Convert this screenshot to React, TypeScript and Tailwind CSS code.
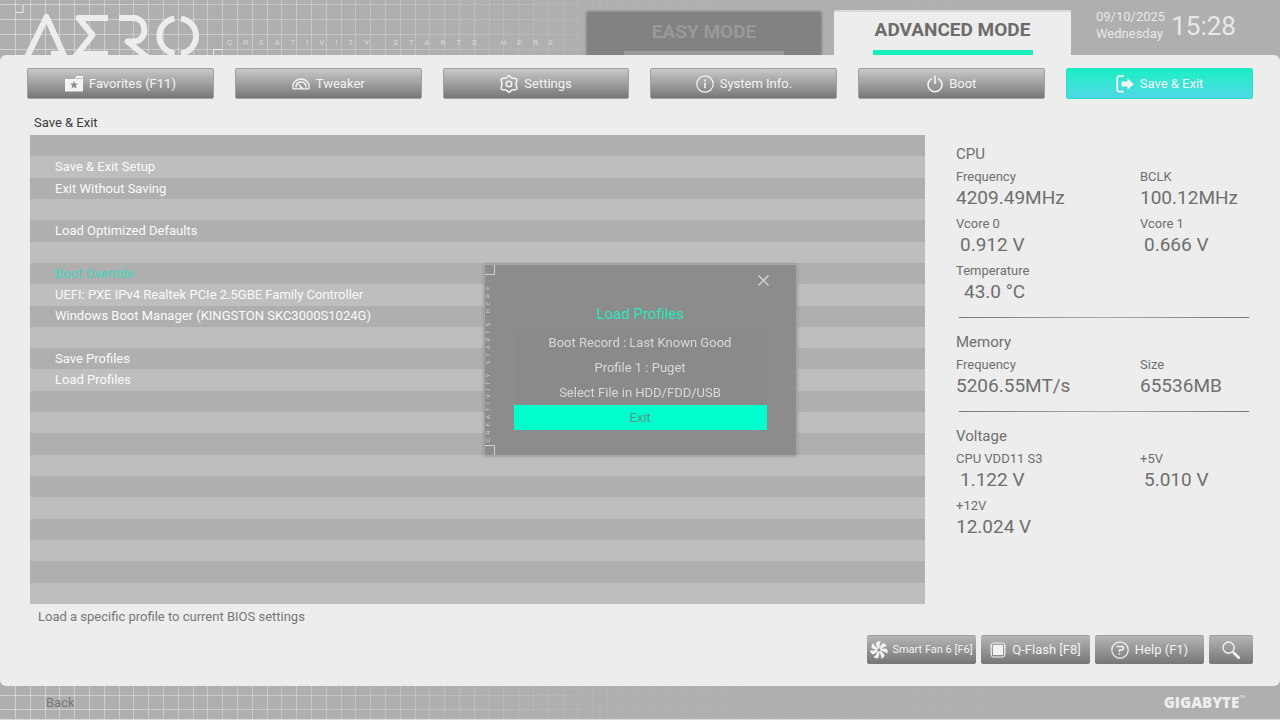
import { useState } from "react";
import type { ReactNode } from "react";

interface Reading {
  label: string;
  value: string;
  indent?: string;
}

interface SensorGroup {
  title: string;
  readings: Reading[];
}

const FONT = "font-[Roboto,'Open_Sans',sans-serif]";

const ROWS = [
  "",
  "Save & Exit Setup",
  "Exit Without Saving",
  "",
  "Load Optimized Defaults",
  "",
  "Boot Override",
  "UEFI: PXE IPv4 Realtek PCIe 2.5GBE Family Controller",
  "Windows Boot Manager (KINGSTON SKC3000S1024G)",
  "",
  "Save Profiles",
  "Load Profiles",
  ...Array<string>(10).fill(""),
];

const SENSORS: SensorGroup[] = [
  {
    title: "CPU",
    readings: [
      { label: "Frequency", value: "4209.49MHz" },
      { label: "BCLK", value: "100.12MHz" },
      { label: "Vcore 0", value: "0.912 V", indent: "pl-1" },
      { label: "Vcore 1", value: "0.666 V", indent: "pl-1" },
      { label: "Temperature", value: "43.0 °C", indent: "pl-2" },
    ],
  },
  {
    title: "Memory",
    readings: [
      { label: "Frequency", value: "5206.55MT/s" },
      { label: "Size", value: "65536MB" },
    ],
  },
  {
    title: "Voltage",
    readings: [
      { label: "CPU VDD11 S3", value: "1.122 V", indent: "pl-1" },
      { label: "+5V", value: "5.010 V", indent: "pl-1" },
      { label: "+12V", value: "12.024 V" },
    ],
  },
];

const PROFILES = [
  "Boot Record : Last Known Good",
  "Profile 1 : Puget",
  "Select File in HDD/FDD/USB",
  "Exit",
];

function FolderIcon() {
  return (
    <svg width="18" height="16" viewBox="0 0 18 16" aria-hidden="true">
      <path d="M0 3h10l1.500-3H18v15.500H0z" fill="currentColor" />
      <path d="M11.500 2.500H17" stroke="#a8a8a8" strokeWidth=".8" />
      <path d="M9 5l1.100 2.600 2.800.2-2.100 1.800.7 2.800L9 10.900l-2.500 1.500.7-2.800-2.100-1.800 2.800-.2z" fill="#8f8f8f" />
    </svg>
  );
}

function GaugeIcon() {
  return (
    <svg width="18" height="12" viewBox="0 0 18 12" fill="none" stroke="currentColor" aria-hidden="true">
      <path d="M1.200 10.800C-.2 5 4 1 9 1s9.200 4 7.800 9.800z" strokeWidth="1.300" strokeLinejoin="round" />
      <path d="M4 9.500C4 5.800 6.400 4 9 4s5 1.800 5 5.500" strokeWidth="1.500" />
      <path d="M6.500 5.500l4.500 4.800H8.800z" fill="currentColor" strokeWidth=".8" />
    </svg>
  );
}

function GearIcon() {
  return (
    <svg width="18" height="18" viewBox="0 0 18 18" fill="none" stroke="currentColor" strokeWidth="1.500" aria-hidden="true">
      <path
        d="M7 2.500Q9 -.9 11 2.500Q12.300 3.700 14 3.200Q18.300 3.300 16.400 6.700Q15.800 9 16.400 11.300Q18.300 14.700 14 14.800Q12.300 14.300 11 15.500Q9 18.900 7 15.500Q5.700 14.300 4 14.800Q-.3 14.700 1.600 11.300Q2.200 9 1.600 6.700Q-.3 3.300 4 3.200Q5.700 3.700 7 2.500z"
        strokeLinejoin="round"
      />
      <circle cx="9" cy="9" r="2.800" />
    </svg>
  );
}

function InfoIcon() {
  return (
    <svg width="18" height="18" viewBox="0 0 18 18" fill="none" stroke="currentColor" aria-hidden="true">
      <circle cx="9" cy="9" r="8.200" strokeWidth="1.200" />
      <path d="M9 7.500V13.200M9 4.500V6.200" strokeWidth="1.600" />
    </svg>
  );
}

function PowerIcon() {
  return (
    <svg width="16" height="18" viewBox="0 0 16 18" fill="none" stroke="currentColor" strokeWidth="1.600" aria-hidden="true">
      <path d="M5 3.400a7 7 0 1 0 6 0M8 .5V9" />
    </svg>
  );
}

function ExitIcon() {
  return (
    <svg width="18" height="18" viewBox="0 0 18 18" fill="none" stroke="currentColor" aria-hidden="true">
      <path d="M8 1.200H3.500Q1.200 1.200 1.200 3.500V14.500Q1.200 16.600 3.500 16.600H8" strokeWidth="1.800" />
      <path d="M5.500 6.500H11.500V3.500L17.800 9.200 11.500 14.700V11.500H5.500z" fill="currentColor" stroke="none" />
    </svg>
  );
}

function FanIcon() {
  return (
    <svg width="18" height="18" viewBox="0 0 18 18" fill="currentColor" aria-hidden="true">
      {Array.from({ length: 7 }, (_, i) => (
        <path
          key={i}
          d="M8.200 7.600C7 6 5.700 3.500 6.400 1.200Q8.500 -.2 11 .3C9.300 2.200 9.600 4.500 9.800 7.600z"
          transform={`rotate(${(i * 360) / 7} 9 9)`}
        />
      ))}
      <circle cx="9" cy="9" r="1.300" fill="#8c8c8c" />
    </svg>
  );
}

function ChipIcon() {
  return (
    <svg width="16" height="16" viewBox="0 0 16 16" fill="none" stroke="currentColor" aria-hidden="true">
      <rect x="1.300" y="1" width="13.400" height="14" rx="2" strokeWidth="1" />
      <path d="M.5 3v10M15.500 3v10" strokeWidth=".8" strokeDasharray="1 1" />
      <rect x="3" y="3" width="10" height="10" fill="currentColor" stroke="none" />
    </svg>
  );
}

function HelpIcon() {
  return (
    <svg width="18" height="18" viewBox="0 0 18 18" fill="none" stroke="currentColor" aria-hidden="true">
      <circle cx="9" cy="9" r="8.200" strokeWidth="1.200" />
      <path d="M5.500 5.500H11Q12.500 5.500 12.500 7T11 9H8.500V11M8.500 12V13.800" strokeWidth="1.500" />
    </svg>
  );
}

function SearchIcon() {
  return (
    <svg width="18" height="18" viewBox="0 0 18 18" fill="none" stroke="currentColor" aria-hidden="true">
      <circle cx="6.600" cy="6.600" r="5.600" strokeWidth="1.400" />
      <path d="M10.800 10.800L12 12" strokeWidth="1.400" />
      <path d="M12 12l4.600 4.600" strokeWidth="2.800" strokeLinecap="round" />
    </svg>
  );
}

const NAV: { label: string; icon: ReactNode }[] = [
  { label: "Favorites (F11)", icon: <FolderIcon /> },
  { label: "Tweaker", icon: <GaugeIcon /> },
  { label: "Settings", icon: <GearIcon /> },
  { label: "System Info.", icon: <InfoIcon /> },
  { label: "Boot", icon: <PowerIcon /> },
  { label: "Save & Exit", icon: <ExitIcon /> },
];

// Faint blueprint grid that fades out towards the right
function GridLines({ id, height, rows }: { id: string; height: number; rows: number[] }) {
  return (
    <svg className="pointer-events-none absolute inset-0 h-full w-full" aria-hidden="true">
      <defs>
        <linearGradient id={id} gradientUnits="userSpaceOnUse" x1="0" y1="0" x2="1070" y2="0">
          <stop offset="0" stopColor="#fff" stopOpacity=".42" />
          <stop offset=".3" stopColor="#fff" stopOpacity=".28" />
          <stop offset=".55" stopColor="#fff" stopOpacity=".05" />
          <stop offset="1" stopColor="#fff" stopOpacity="0" />
        </linearGradient>
      </defs>
      {Array.from({ length: 72 }, (_, i) => (
        <rect key={i} x={Math.round(15 + i * 14.8)} y="0" width="1" height={height} fill={`url(#${id})`} />
      ))}
      {rows.map((y) => (
        <rect key={y} x="0" y={y} width="1070" height="1" fill={`url(#${id})`} />
      ))}
    </svg>
  );
}

function AeroLogo() {
  return (
    <svg
      className="relative"
      width="224"
      height="55"
      viewBox="0 0 224 55"
      fill="none"
      stroke="#ededed"
      role="img"
      aria-label="AERO"
    >
      <path d="M15 12.500h8V5" strokeWidth="1" />
      <path d="M213.500 55v-5.500h8.500" strokeWidth="1" />
      <g strokeWidth="6" strokeLinejoin="round">
        <path d="M25.500 60L46.500 17 66 60" />
        <path d="M51 54h14" />
        <path d="M108 18H78.500L92.500 35 75 57M80 54h28" />
        <path d="M119 18h14.500c14.500 0 14.500 23.500 0 23.500h-6L148 58" />
        <path d="M174.500 18.600a17.700 17.700 0 0 0 0 35M181 18.600a17.700 17.700 0 0 1 0 35" />
      </g>
    </svg>
  );
}

function SensorPanel() {
  return (
    <aside className="mr-1 w-[293px] shrink-0 pt-[9px] text-[#6f6f6f]">
      {SENSORS.map((group, i) => (
        <section key={group.title}>
          {i > 0 && (
            <hr className="mt-3.5 mb-3.5 ml-[3px] h-px border-0 bg-linear-to-r from-[#777] via-[#aaa] to-[#777]" />
          )}
          <h2 className="mb-[3px] text-[15px] leading-5">{group.title}</h2>
          <dl className="grid grid-cols-[184px_1fr] gap-y-[5px]">
            {group.readings.map((r) => (
              <div key={r.label}>
                <dt className="text-[13px] leading-5">{r.label}</dt>
                <dd className={"text-[19px] leading-[22px] " + (r.indent ?? "")}>{r.value}</dd>
              </div>
            ))}
          </dl>
        </section>
      ))}
    </aside>
  );
}

function ProfileDialog({ onClose }: { onClose: () => void }) {
  return (
    <div className="fixed inset-0 flex items-center justify-center">
      <div
        role="dialog"
        aria-label="Load Profiles"
        className="relative w-[313px] border border-[#a6a6a6] bg-[#8c8c8c] px-[29px] pt-[37px] pb-[25px] text-center text-[#d8d8d8] shadow-[0_0_3px_#888]"
      >
        <div className="absolute inset-y-0 left-0 flex w-2.5 flex-col items-start justify-between text-[#d0d0d0]">
          <span className="size-2.5 border-r border-b border-current" />
          <span className="rotate-180 text-[6px] leading-none tracking-[4px] whitespace-nowrap [writing-mode:vertical-rl]">
            CREATIVITY STARTS HERE.
          </span>
          <span className="size-2.5 border-t border-r border-current" />
        </div>
        <button onClick={onClose} aria-label="Close" className="absolute top-2.5 right-[27px]">
          <svg width="11" height="11" viewBox="0 0 11 11" stroke="currentColor" strokeWidth="1.200">
            <path d="M.5 .5l10 10M10.500 .5l-10 10" />
          </svg>
        </button>
        <h2 className="mb-1 text-[15px] leading-6 text-[#25eebc]">Load Profiles</h2>
        <div className="flex flex-col bg-[#8a8a8a]">
          {PROFILES.map((p) => (
            <button
              key={p}
              onClick={onClose}
              className={"h-[25px] text-[13px] " + (p === "Exit" ? "bg-[#00ffcc] text-[#5f8f84]" : "")}
            >
              {p}
            </button>
          ))}
        </div>
      </div>
    </div>
  );
}

export default function App() {
  const [page, setPage] = useState("Save & Exit");
  const [dialogOpen, setDialogOpen] = useState(true);

  const toolClass =
    "flex h-[29px] items-center justify-center rounded-xs border-t border-[#a0a0a0] bg-linear-to-b from-[#b5b5b5] to-[#767676] whitespace-nowrap text-[#f2f2f2]";

  return (
    <div className={"flex min-h-screen flex-col bg-[#afafaf] text-[13px] " + FONT}>
      {/* Header */}
      <header className="relative -mb-2 flex h-[63px] items-start">
        <GridLines id="grid-top" height={63} rows={[4, 19, 34, 49]} />
        <AeroLogo />
        <p className="relative mt-[38px] ml-[3px] text-[8px] leading-[10px] tracking-[11px] whitespace-nowrap text-[#dadada]">
          CREATIVITY STARTS HERE.
        </p>
        <div className="relative mt-2.5 ml-auto flex gap-[11px] text-[19px] font-bold">
          <button className="flex h-[53px] w-[238px] flex-col items-center rounded-t-sm border-2 border-b-0 border-[#9a9a9a] bg-[#808080]/95 text-[#999]">
            <span className="h-[39px] leading-[40px]">EASY MODE</span>
            <span className="h-1 w-40 bg-[#999]" />
          </button>
          <button className="flex h-[53px] w-[237px] flex-col items-center rounded-t-xs border-t-2 border-[#dadada] bg-[#ededed] text-[#6c6c6c]">
            <span className="h-[39px] leading-9">ADVANCED MODE</span>
            <span className="h-[13px] w-40 bg-[#14efbb]" />
          </button>
        </div>
        <div className="flex w-[209px] shrink-0 gap-1.5 pt-2 pl-[25px] text-[#e8e8e8]">
          <div className="text-[13px] leading-[17px]">
            <div>09/10/2025</div>
            <div>Wednesday</div>
          </div>
          <time className="text-[26px] leading-9">15:28</time>
        </div>
      </header>

      <main className="relative flex flex-1 flex-col rounded-md bg-[#ededed] px-[27px] pt-[13px] pb-[22px]">
        <nav className="grid grid-cols-6 gap-[21px]">
          {NAV.map((item) => (
            <button
              key={item.label}
              onClick={() => setPage(item.label)}
              className={
                "flex h-[31px] items-center justify-center gap-1.5 rounded-xs border text-[#f4f4f4] " +
                (page === item.label
                  ? "border-[#2be0c4] bg-linear-to-b from-[#10f0c4] to-[#4cd8e4]"
                  : "border-[#a0a0a0] bg-linear-to-b from-[#c9c9c9] to-[#777]")
              }
            >
              {item.icon}
              {item.label}
            </button>
          ))}
        </nav>

        <h1 className="pt-3 pl-[7px] leading-6 text-[#3c3c3c]">{page}</h1>

        <div className="flex flex-1 gap-[31px] pl-[3px]">
          <ul className="flex min-w-0 flex-1 flex-col">
            {ROWS.map((row, i) => (
              <li
                key={i}
                className={
                  "flex min-h-5 flex-1 items-center pl-[25px] " +
                  (i % 2 ? "bg-[#bebebe] " : "bg-[#afafaf] ") +
                  (row === "Boot Override" ? "text-[#3fd6bc]" : "text-[#fafafa]")
                }
              >
                {row === "Boot Override" ? (
                  row
                ) : (
                  row && <button onClick={() => setDialogOpen(row === "Load Profiles")}>{row}</button>
                )}
              </li>
            ))}
          </ul>
          <SensorPanel />
        </div>

        <p className="pl-[11px] leading-[26px] text-[#777]">Load a specific profile to current BIOS settings</p>

        <div className="mt-[5px] flex justify-end gap-[5px]">
          <button className={toolClass + " w-[109px] gap-1 text-[11px]"}>
            <FanIcon />
            Smart Fan 6 [F6]
          </button>
          <button className={toolClass + " w-[109px] gap-1.5"}>
            <ChipIcon />
            Q-Flash [F8]
          </button>
          <button className={toolClass + " w-[109px] gap-1.5"}>
            <HelpIcon />
            Help (F1)
          </button>
          <button className={toolClass + " w-11"} aria-label="Search">
            <SearchIcon />
          </button>
        </div>
      </main>

      {/* Footer */}
      <footer className="relative flex h-[34px] items-center justify-between border-b border-[#dcdcdc] pr-[35px] pl-[46px]">
        <GridLines id="grid-bottom" height={34} rows={[9, 23]} />
        <button className="relative text-[#777]">Back</button>
        <span className="flex items-start font-['Open_Sans',sans-serif] text-[15px] font-extrabold text-[#ededed]">
          GIGABYTE
          <sup className="top-0 text-[4px] leading-3 font-normal">TM</sup>
        </span>
      </footer>

      {dialogOpen && <ProfileDialog onClose={() => setDialogOpen(false)} />}
    </div>
  );
}
